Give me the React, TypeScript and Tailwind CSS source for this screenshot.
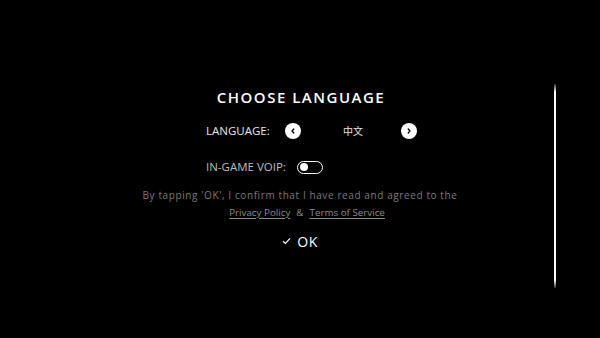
import React from "react";

export default function App() {
  return (
    <div
      className="relative w-[600px] h-[338px] bg-black overflow-hidden"
      style={{ fontFamily: '"Open Sans", "Noto Sans CJK SC", sans-serif' }}
    >
      <div className="flex flex-col pt-[87px]">
        <div className="h-[20px] flex items-center justify-center text-white text-[15px] font-semibold tracking-[1.5px] pl-[2px]">
          CHOOSE LANGUAGE
        </div>

        <div className="mt-[16px] ml-[206px] h-[16px] flex items-center">
          <span className="w-[63px] whitespace-nowrap text-[11.5px] text-[#e6e6e6] leading-none">LANGUAGE:</span>
          <div className="ml-[16px] w-[16px] h-[16px] rounded-full bg-white flex items-center justify-center">
            <svg width="8" height="8" viewBox="0 0 8 8">
              <path d="M4.8 2 L3 4 L4.8 6" stroke="#000" strokeWidth="1.3" fill="none" strokeLinecap="round" strokeLinejoin="round" />
            </svg>
          </div>
          <div className="w-[100px] flex justify-center pl-[4px] text-[10px] text-[#e6e6e6] leading-none">中文</div>
          <div className="w-[16px] h-[16px] rounded-full bg-white flex items-center justify-center">
            <svg width="8" height="8" viewBox="0 0 8 8">
              <path d="M3.2 2 L5 4 L3.2 6" stroke="#000" strokeWidth="1.3" fill="none" strokeLinecap="round" strokeLinejoin="round" />
            </svg>
          </div>
        </div>

        <div className="mt-[21px] ml-[206px] h-[14px] flex items-center">
          <span className="w-[81px] whitespace-nowrap text-[11.5px] text-[#bdbdbd] leading-none">IN-GAME VOIP:</span>
          <div className="ml-[10px] w-[26px] h-[13px] rounded-full border-[1.5px] border-white flex items-center pl-[1.5px]">
            <div className="w-[8px] h-[8px] rounded-full bg-white" />
          </div>
        </div>

        <div className="mt-[13px] h-[16px] flex items-center justify-center whitespace-nowrap text-[10px] text-[#7a7a7a] tracking-[0.6px]">
          By tapping 'OK', I confirm that I have read and agreed to the
        </div>

        <div className="mt-[2px] h-[16px] flex items-center justify-center pl-[14px] text-[9.8px] text-[#8a8a8a]">
          <span className="underline underline-offset-2">Privacy Policy</span>
          <span className="mx-[6px]">&amp;</span>
          <span className="underline underline-offset-2">Terms of Service</span>
        </div>

        <div className="mt-[11px] h-[18px] flex items-center justify-center text-white text-[14px] tracking-[0.5px]">
          <svg width="9" height="8" viewBox="0 0 9 8" className="mr-[6px]">
            <path d="M1 4.2 L3.4 6.5 L8 1.3" stroke="#fff" strokeWidth="1.2" fill="none" />
          </svg>
          OK
        </div>
      </div>

      <div className="absolute left-[554px] top-[84px] w-[2px] h-[204px] rounded-full" style={{ backgroundImage: "linear-gradient(to bottom, rgba(255,255,255,0.2), #fff 4%, #fff 96%, rgba(255,255,255,0.2))" }} />
    </div>
  );
}
